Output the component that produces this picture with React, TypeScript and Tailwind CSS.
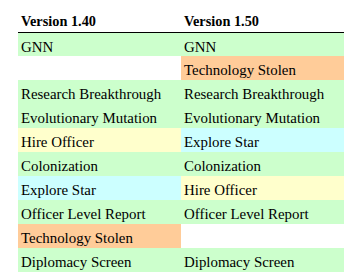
import React from "react";

const G = "bg-[#ccffcc]";
const O = "bg-[#ffcc99]";
const Y = "bg-[#ffffcc]";
const C = "bg-[#ccffff]";
const W = "bg-white";

const rows: [string, string, string, string][] = [
  ["GNN", G, "GNN", G],
  ["", W, "Technology Stolen", O],
  ["Research Breakthrough", G, "Research Breakthrough", G],
  ["Evolutionary Mutation", G, "Evolutionary Mutation", G],
  ["Hire Officer", Y, "Explore Star", C],
  ["Colonization", G, "Colonization", G],
  ["Explore Star", C, "Hire Officer", Y],
  ["Officer Level Report", G, "Officer Level Report", G],
  ["Technology Stolen", O, "", W],
  ["Diplomacy Screen", G, "Diplomacy Screen", G],
];

export default function App() {
  return (
    <div className="w-[363px] h-[279px] bg-white text-black pl-[18px] font-['Liberation_Serif']">
      <div className="w-[326px]">
        <div className="grid grid-cols-2 h-[33px] border-b border-black font-bold text-[14.3px] leading-none">
          <div className="pl-[3px] pt-[14px] whitespace-nowrap">Version 1.40</div>
          <div className="pl-[3px] pt-[14px] whitespace-nowrap">Version 1.50</div>
        </div>
        {rows.map((r, i) => (
          <div
            key={i}
            className={`grid grid-cols-2 text-[14.9px] leading-none ${i === 0 ? "h-[23px]" : "h-[24px]"}`}
          >
            <div className={`${r[1]} pl-[3px] ${i === 0 ? "pt-[6.5px]" : "pt-[7px]"} whitespace-nowrap`}>{r[0]}</div>
            <div className={`${r[3]} pl-[3px] ${i === 0 ? "pt-[6.5px]" : "pt-[7px]"} whitespace-nowrap`}>{r[2]}</div>
          </div>
        ))}
      </div>
    </div>
  );
}
